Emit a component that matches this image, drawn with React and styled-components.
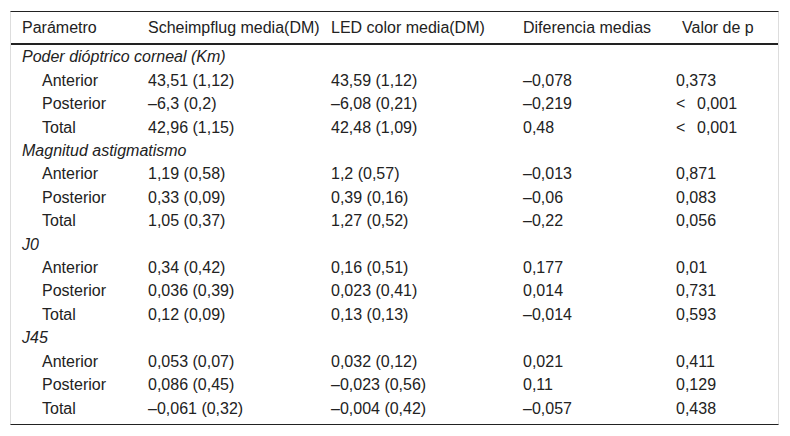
import React from 'react'
import styled, { createGlobalStyle } from 'styled-components'

const GlobalStyle = createGlobalStyle`
  html, body {
    margin: 0;
    padding: 0;
    background: #fff;
  }
  body {
    font-family: "Liberation Sans", Arial, sans-serif;
    color: #222;
  }
`

const TableBox = styled.div`
  margin: 11px 11px 0 10px;
  width: 769px;
  border-top: 1px solid #222;
  border-bottom: 1px solid #222;
  border-left: 1px solid #ddd;
  border-right: 1px solid #ddd;
  box-sizing: border-box;
  font-size: 16px;
  line-height: 23.4px;
`

const Row = styled.div`
  display: grid;
  grid-template-columns: 126px 183px 192px 153px 1fr;
  padding-left: 11px;
`

const HeaderRow = styled(Row)`
  padding-top: 4px;
  padding-bottom: 4px;
  border-bottom: 2px solid #222;
`

const HeadCell = styled.div`
  white-space: nowrap;
  padding-left: ${(p) => p.$shift || 0}px;
`

const Body = styled.div`
  padding-bottom: 4px;
`

const GroupRow = styled.div`
  padding-left: 11px;
  font-style: italic;
`

const Cell = styled.div`
  white-space: nowrap;
  padding-left: ${(p) => (p.$indent ? 20 : 0)}px;
`

const Less = styled.span`
  display: inline-block;
  width: 21px;
`

const groups = [
  {
    title: 'Poder dióptrico corneal (Km)',
    rows: [
      ['Anterior', '43,51 (1,12)', '43,59 (1,12)', '–0,078', '0,373'],
      ['Posterior', '–6,3 (0,2)', '–6,08 (0,21)', '–0,219', '< 0,001'],
      ['Total', '42,96 (1,15)', '42,48 (1,09)', '0,48', '< 0,001'],
    ],
  },
  {
    title: 'Magnitud astigmatismo',
    rows: [
      ['Anterior', '1,19 (0,58)', '1,2 (0,57)', '–0,013', '0,871'],
      ['Posterior', '0,33 (0,09)', '0,39 (0,16)', '–0,06', '0,083'],
      ['Total', '1,05 (0,37)', '1,27 (0,52)', '–0,22', '0,056'],
    ],
  },
  {
    title: 'J0',
    rows: [
      ['Anterior', '0,34 (0,42)', '0,16 (0,51)', '0,177', '0,01'],
      ['Posterior', '0,036 (0,39)', '0,023 (0,41)', '0,014', '0,731'],
      ['Total', '0,12 (0,09)', '0,13 (0,13)', '–0,014', '0,593'],
    ],
  },
  {
    title: 'J45',
    rows: [
      ['Anterior', '0,053 (0,07)', '0,032 (0,12)', '0,021', '0,411'],
      ['Posterior', '0,086 (0,45)', '–0,023 (0,56)', '0,11', '0,129'],
      ['Total', '–0,061 (0,32)', '–0,004 (0,42)', '–0,057', '0,438'],
    ],
  },
]

function PValue({ value }) {
  if (value.startsWith('<')) {
    return (
      <>
        <Less>&lt;</Less>
        {value.slice(2)}
      </>
    )
  }
  return value
}

export default function App() {
  return (
    <>
      <GlobalStyle />
      <TableBox>
        <HeaderRow>
          <HeadCell>Parámetro</HeadCell>
          <HeadCell>Scheimpflug media(DM)</HeadCell>
          <HeadCell>LED color media(DM)</HeadCell>
          <HeadCell>Diferencia medias</HeadCell>
          <HeadCell $shift={6}>Valor de p</HeadCell>
        </HeaderRow>
        <Body>
          {groups.map((g) => (
            <React.Fragment key={g.title}>
              <GroupRow>{g.title}</GroupRow>
              {g.rows.map((r) => (
                <Row key={g.title + r[0]}>
                  <Cell $indent>{r[0]}</Cell>
                  <Cell>{r[1]}</Cell>
                  <Cell>{r[2]}</Cell>
                  <Cell>{r[3]}</Cell>
                  <Cell>
                    <PValue value={r[4]} />
                  </Cell>
                </Row>
              ))}
            </React.Fragment>
          ))}
        </Body>
      </TableBox>
    </>
  )
}
